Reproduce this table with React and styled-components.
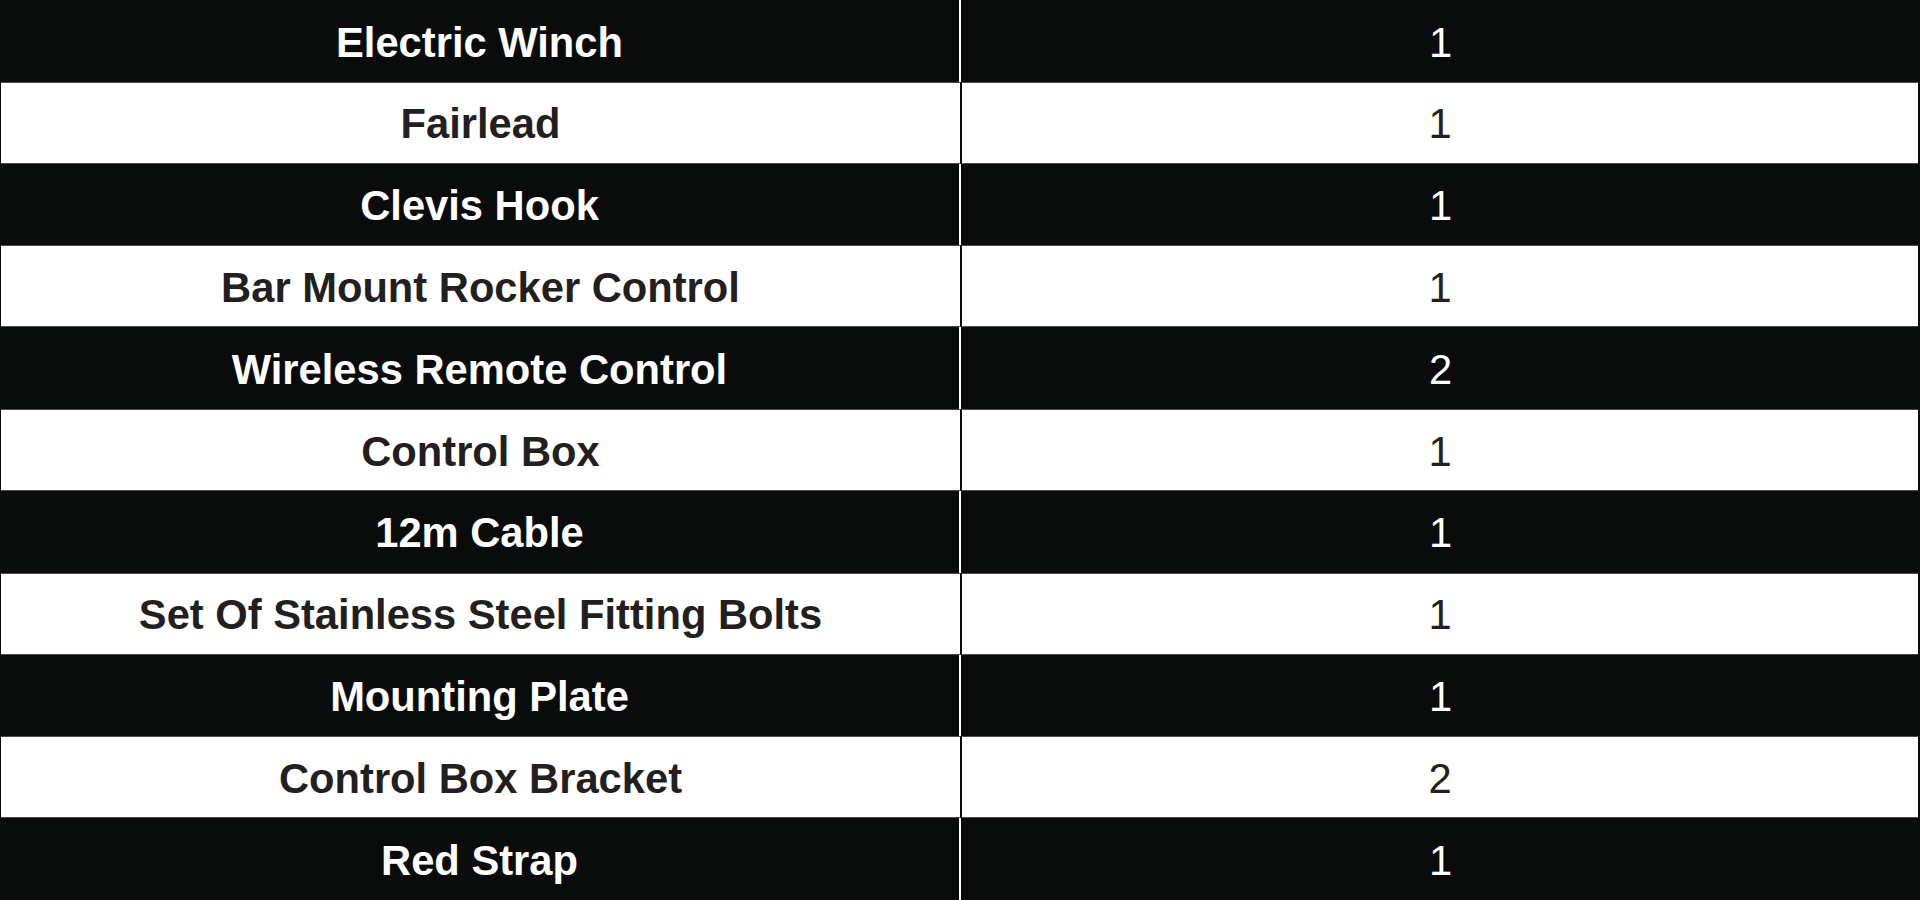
import React from "react";
import styled, { createGlobalStyle } from "styled-components";

const Global = createGlobalStyle`
  html, body { margin: 0; padding: 0; background: #0a0c0b; }
  #root { height: 100vh; }
`;

const Table = styled.div`
  display: grid;
  grid-template-rows: repeat(11, 1fr);
  height: 100vh;
  width: 100%;
  font-family: "Liberation Sans", Arial, sans-serif;
`;

const Row = styled.div`
  display: grid;
  grid-template-columns: 959px 2px 1fr;
  align-items: stretch;
  background: ${(p) => (p.$light ? "#ffffff" : "#0a0c0b")};
  color: ${(p) => (p.$light ? "#231f20" : "#ffffff")};
  box-sizing: border-box;
  border-left: ${(p) => (p.$light ? "1px solid #0a0c0b" : "none")};
  border-right: ${(p) => (p.$light ? "2px solid #0a0c0b" : "none")};
  box-shadow: ${(p) =>
    p.$light ? "inset 0 1px 0 #4d4d4d, inset 0 -1px 0 #4d4d4d" : "none"};
`;

const Divider = styled.div`
  background: ${(p) => (p.$light ? "#0a0c0b" : "#ffffff")};
`;

const Cell = styled.div`
  display: flex;
  align-items: center;
  justify-content: center;
  padding-top: 3px;
  font-size: 41.7px;
  font-weight: ${(p) => (p.$bold ? 700 : 400)};
  line-height: 1;
  white-space: nowrap;
`;

const items = [
  ["Electric Winch", 1],
  ["Fairlead", 1],
  ["Clevis Hook", 1],
  ["Bar Mount Rocker Control", 1],
  ["Wireless Remote Control", 2],
  ["Control Box", 1],
  ["12m Cable", 1],
  ["Set Of Stainless Steel Fitting Bolts", 1],
  ["Mounting Plate", 1],
  ["Control Box Bracket", 2],
  ["Red Strap", 1],
];

export default function App() {
  return (
    <>
      <Global />
      <Table>
        {items.map(([name, qty], i) => {
          const light = i % 2 === 1;
          return (
            <Row key={name} $light={light}>
              <Cell $bold>{name}</Cell>
              <Divider $light={light} />
              <Cell>{qty}</Cell>
            </Row>
          );
        })}
      </Table>
    </>
  );
}
